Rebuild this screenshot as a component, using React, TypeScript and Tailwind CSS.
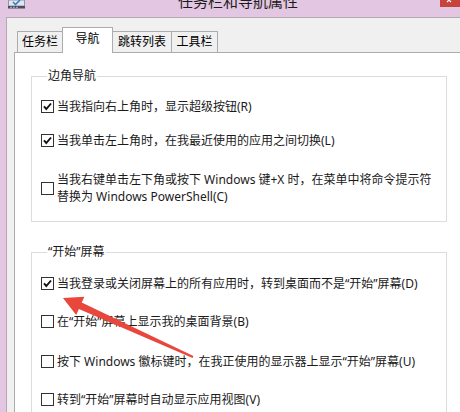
import type { ReactNode } from "react";

const font = "font-['Noto_Sans','Noto_Sans_CJK_SC',sans-serif]";

function CheckBox({ checked }: { checked?: boolean }) {
  return (
    <span className="w-[13px] h-[13px] border border-[#333333] bg-white flex items-center justify-center shrink-0">
      {checked && (
        <svg width="11" height="11" viewBox="0 0 11 11">
          <path d="M2 5.4 L4.3 8 L9 2.5" fill="none" stroke="#111" strokeWidth="1.9" />
        </svg>
      )}
    </span>
  );
}

function Option({ checked, className, children }: { checked?: boolean; className?: string; children: ReactNode }) {
  return (
    <div className={`flex items-center gap-[3px] ${className ?? ""}`}>
      <CheckBox checked={checked} />
      <span className="text-[12px] leading-[17px] text-[#1a1a1a] whitespace-nowrap">{children}</span>
    </div>
  );
}

function Tab({ label, active, className }: { label: string; active?: boolean; className: string }) {
  if (active) {
    return (
      <div
        className={`relative z-10 -mb-px h-[26px] bg-white border border-b-0 border-[#acacac] flex items-center justify-center pb-[3px] text-[12px] text-black ${className}`}
      >
        {label}
      </div>
    );
  }
  return (
    <div
      className={`h-[21px] bg-[#f0f0f0] border-t border-[#acacac] flex items-center justify-center text-[12px] text-black ${className}`}
    >
      {label}
    </div>
  );
}

export default function App() {
  return (
    <div className={`relative w-[460px] h-[412px] overflow-hidden bg-[#e3c6e1] flex flex-col ${font}`}>
      {/* title bar */}
      <div className="h-[17px] flex items-start shrink-0">
        <svg className="ml-[8px]" width="17" height="9" viewBox="0 0 17 9">
          <rect x="0.5" y="0" width="16" height="6" fill="#dfe6ee" stroke="#8a97a8" />
          <path d="M5 2 L7.5 4.5 L12 0" fill="none" stroke="#3f7cc4" strokeWidth="1.6" />
          <rect x="0" y="6" width="17" height="2.5" fill="#4a4f58" />
          <rect x="2" y="6.8" width="2" height="1" fill="#9fb7d8" />
          <rect x="5" y="6.8" width="2" height="1" fill="#9fb7d8" />
          <rect x="8" y="6.8" width="2" height="1" fill="#9fb7d8" />
        </svg>
        <span className="ml-[153px] -mt-[6px] text-[15px] leading-[15px] text-[#1b1b1b] whitespace-nowrap">
          任务栏和导航属性
        </span>
        <div className="ml-auto w-[20px] h-[7px] bg-[#c8433b] flex justify-center">
          <svg width="10" height="7" viewBox="0 0 10 7">
            <path d="M2 -2 L6 2 M6 -2 L2 2" stroke="#fff" strokeWidth="1.2" />
          </svg>
        </div>
      </div>

      {/* dialog body */}
      <div className="flex-1 ml-[6px] bg-[#f0f0f0] border-t border-l border-[#b4a8b3] pl-[7px] flex flex-col overflow-hidden">
        <div className="h-[34px] flex items-end pl-[3px] shrink-0">
          <Tab label="任务栏" className="w-[45px] border-l" />
          <Tab label="导航" active className="w-[51px]" />
          <Tab label="跳转列表" className="w-[59px] border-r" />
          <Tab label="工具栏" className="w-[46px] border-r" />
        </div>

        <div className="flex-1 w-[460px] bg-white border-t border-l border-[#acacac] pt-[15px] pl-[16px]">
          <fieldset className="w-[416px] border border-[#dcdcdc] pl-[9px] pb-[16px]">
            <legend className="ml-[6px] px-[1px] text-[12px] leading-[16px] text-[#1a1a1a]">边角导航</legend>
            <Option checked className="mt-[14px]">当我指向右上角时，显示超级按钮(R)</Option>
            <Option checked className="mt-[17px]">当我单击左上角时，在我最近使用的应用之间切换(L)</Option>
            <Option className="mt-[22px]">
              当我右键单击左下角或按下 Windows 键+X 时，在菜单中将命令提示符
              <br />
              替换为 Windows PowerShell(C)
            </Option>
          </fieldset>

          <fieldset className="mt-[22px] w-[416px] border border-[#dcdcdc] pl-[9px] pb-[20px]">
            <legend className="ml-[6px] px-[1px] text-[12px] leading-[16px] text-[#1a1a1a]">“开始”屏幕</legend>
            <Option checked className="mt-[15px]">当我登录或关闭屏幕上的所有应用时，转到桌面而不是“开始”屏幕(D)</Option>
            <Option className="mt-[21px]">在“开始”屏幕上显示我的桌面背景(B)</Option>
            <Option className="mt-[23px]">按下 Windows 徽标键时，在我正使用的显示器上显示“开始”屏幕(U)</Option>
            <Option className="mt-[21px]">转到“开始”屏幕时自动显示应用视图(V)</Option>
          </fieldset>
        </div>
      </div>

      {/* red annotation arrow */}
      <svg className="absolute left-0 top-0 pointer-events-none" width="460" height="412" viewBox="0 0 460 412">
        <polygon
          points="63,298 84.4,296.7 81.7,302.6 193.4,356.1 192.6,357.9 78.9,309 76.2,314.9"
          fill="#e9463c"
        />
      </svg>
    </div>
  );
}
